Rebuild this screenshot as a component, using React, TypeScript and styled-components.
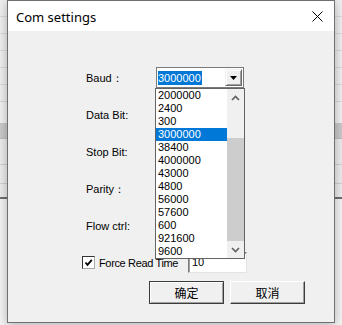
import { Fragment } from 'react';
import styled, { createGlobalStyle } from 'styled-components';

const GlobalStyle = createGlobalStyle`
  html, body {
    margin: 0;
    padding: 0;
    width: 342px;
    height: 325px;
    overflow: hidden;
    background: #f4f4f4;
  }
`;

const BAUDS = [
  '2000000', '2400', '300', '3000000', '38400', '4000000', '43000',
  '4800', '56000', '57600', '600', '921600', '9600',
];

// the other combos sit under the open list, so only Baud shows a value
const FIELDS = [
  { label: 'Baud：', value: '3000000', open: true },
  { label: 'Data Bit:', value: '' },
  { label: 'Stop Bit:', value: '' },
  { label: 'Parity：', value: '' },
  { label: 'Flow ctrl:', value: '' },
];

// rows of the table in the window behind the dialog
const BACK_ROWS = [
  { h: 16, line: '#dadada' },
  { h: 16, line: '#dadada' },
  { h: 16, line: '#dadada' },
  { h: 16, line: '#dadada' },
  { h: 16, line: '#dadada' },
  { h: 16, line: '#dadada' },
  { h: 20, line: 'transparent', bg: '#f1f1f1' },
  { h: 15, line: '#bdbdbd', bg: '#c9c9c9' },
  { h: 25, line: '#d0d0d0', bg: '#ececec' },
  { h: 18, line: '#d0d0d0', bg: '#ececec' },
  { h: 13, line: '#6e6e6e', bg: '#ececec', thick: true },
];

const Desktop = styled.div`
  position: relative;
  width: 342px;
  height: 325px;
  overflow: hidden;
  background: #f4f4f4;
`;

const BackTable = styled.div`
  display: flex;
  flex-direction: column;
`;

const BackRow = styled.div<{ $h: number; $line: string; $bg?: string; $thick?: boolean }>`
  height: ${(p) => p.$h}px;
  background: ${(p) => p.$bg || '#efefef'};
  border-bottom: ${(p) => (p.$thick ? 2 : 1)}px solid ${(p) => p.$line};
`;

const Dialog = styled.div`
  position: absolute;
  left: 7px;
  top: 0;
  width: 328px;
  height: 323px;
  box-sizing: border-box;
  border: 1px solid #707070;
  background: #f0f0f0;
  box-shadow: 0 2px 10px rgba(0, 0, 0, 0.28);
  display: flex;
  flex-direction: column;
`;

const TitleBar = styled.div`
  height: 30px;
  background: #fff;
  display: flex;
  align-items: center;
  justify-content: space-between;
  padding: 0 11px 0 8px;
`;

const Title = styled.span`
  font-family: 'Noto Sans', 'Open Sans', sans-serif;
  font-size: 13px;
  color: #000;
  margin-top: 1px;
`;

const Body = styled.div`
  flex: 1;
  padding: 36px 0 0 78px;
  font-family: 'Liberation Sans', Arial, sans-serif;
  font-size: 11px;
  color: #000;
`;

const Form = styled.div`
  display: grid;
  grid-template-columns: 70px 88px;
  grid-auto-rows: 21px;
  row-gap: 16px;
  align-items: center;
`;

const Label = styled.span`
  line-height: 21px;
  padding-top: 1px;
`;

const Field = styled.div`
  position: relative;
  height: 21px;
`;

const Combo = styled.div`
  box-sizing: border-box;
  width: 88px;
  height: 21px;
  border: 1px solid #7a7a7a;
  background: #fff;
  display: flex;
  align-items: center;
  padding: 0 0 0 1px;
`;

const ComboValue = styled.span<{ $selected?: boolean }>`
  height: 14px;
  line-height: 14px;
  padding: 0 1px 0 0;
  background: ${(p) => (p.$selected ? '#0078d7' : 'transparent')};
  color: ${(p) => (p.$selected ? '#fff' : '#000')};
`;

const DropButton = styled.div`
  box-sizing: border-box;
  margin-left: auto;
  margin-right: 1px;
  width: 17px;
  height: 17px;
  background: #f0f0f0;
  border: 1px solid;
  border-color: #f0f0f0 #696969 #696969 #f0f0f0;
  box-shadow: inset 1px 1px #fff, inset -1px -1px #a0a0a0;
  display: flex;
  align-items: center;
  justify-content: center;
`;

const ListBox = styled.div`
  position: absolute;
  top: 21px;
  left: -1px;
  z-index: 2;
  box-sizing: border-box;
  width: 90px;
  height: 171px;
  border: 1px solid #646464;
  background: #fff;
  display: flex;
`;

const Items = styled.div`
  flex: 1;
  display: flex;
  flex-direction: column;
`;

const Item = styled.div<{ $active?: boolean }>`
  height: 13px;
  line-height: 13px;
  padding-left: 2px;
  background: ${(p) => (p.$active ? '#0078d7' : 'transparent')};
  color: ${(p) => (p.$active ? '#fff' : '#000')};
`;

const ScrollBar = styled.div`
  width: 17px;
  background: #f0f0f0;
  display: flex;
  flex-direction: column;
`;

const ScrollArrow = styled.div`
  height: 17px;
  display: flex;
  align-items: center;
  justify-content: center;
`;

const ScrollTrack = styled.div`
  flex: 1;
  display: flex;
  flex-direction: column;
  padding-top: 32px;
`;

const Thumb = styled.div`
  flex: 1;
  background: #cdcdcd;
`;

const CheckRow = styled.div`
  display: flex;
  align-items: center;
  margin: 16px 0 0 -4px;
  height: 21px;
`;

const CheckLabel = styled.label`
  width: 106px;
  display: flex;
  align-items: center;
  gap: 4px;
  letter-spacing: -0.35px;
`;

const CheckBox = styled.span`
  box-sizing: border-box;
  width: 13px;
  height: 13px;
  background: #fff;
  border: 1px solid;
  border-color: #333 #aaa #aaa #333;
  display: flex;
  align-items: center;
  justify-content: center;
`;

const TextInput = styled.div`
  box-sizing: border-box;
  width: 59px;
  height: 21px;
  background: #fff;
  border: 1px solid;
  border-color: #7a7a7a #e3e3e3 #e3e3e3 #7a7a7a;
  box-shadow: inset 1px 1px #a0a0a0;
  padding: 4px 0 0 3px;
  line-height: 11px;
`;

const Buttons = styled.div`
  display: flex;
  gap: 6px;
  margin: 8px 0 0 63px;
`;

const Button = styled.button<{ $default?: boolean }>`
  box-sizing: border-box;
  width: 75px;
  height: 23px;
  padding: 0;
  background: #f0f0f0;
  border: 1px solid;
  border-color: ${(p) => (p.$default ? '#3c3c3c' : '#fff #3c3c3c #3c3c3c #fff')};
  box-shadow: ${(p) =>
    p.$default
      ? 'inset 1px 1px #fff, inset -1px -1px #a0a0a0'
      : 'inset -1px -1px #a0a0a0'};
  font-family: 'Noto Sans CJK SC', 'Noto Sans', sans-serif;
  font-size: 12px;
  color: #000;
  display: flex;
  align-items: center;
  justify-content: center;
`;

function CloseIcon() {
  return (
    <svg width="11" height="11" viewBox="0 0 11 11">
      <path d="M0.5 0.5 L10.5 10.5 M10.5 0.5 L0.5 10.5" stroke="#000" strokeWidth="1" />
    </svg>
  );
}

function Chevron({ up }: { up?: boolean }) {
  return (
    <svg width="9" height="6" viewBox="0 0 9 6">
      <path
        d={up ? 'M1 5 L4.5 1.5 L8 5' : 'M1 1 L4.5 4.5 L8 1'}
        fill="none"
        stroke="#606060"
        strokeWidth="1.6"
      />
    </svg>
  );
}

function BaudList() {
  return (
    <ListBox>
      <Items>
        {BAUDS.map((b) => (
          <Item key={b} $active={b === '3000000'}>
            {b}
          </Item>
        ))}
      </Items>
      <ScrollBar>
        <ScrollArrow>
          <Chevron up />
        </ScrollArrow>
        <ScrollTrack>
          <Thumb />
        </ScrollTrack>
        <ScrollArrow>
          <Chevron />
        </ScrollArrow>
      </ScrollBar>
    </ListBox>
  );
}

export default function App() {
  return (
    <Desktop>
      <GlobalStyle />
      <BackTable>
        {BACK_ROWS.map((r, i) => (
          <BackRow key={i} $h={r.h} $line={r.line} $bg={r.bg} $thick={r.thick} />
        ))}
      </BackTable>
      <Dialog>
        <TitleBar>
          <Title>Com settings</Title>
          <CloseIcon />
        </TitleBar>
        <Body>
          <Form>
            {FIELDS.map((f) => (
              <Fragment key={f.label}>
                <Label>{f.label}</Label>
                <Field>
                  <Combo>
                    {f.value && <ComboValue $selected={f.open}>{f.value}</ComboValue>}
                    <DropButton>
                      <svg width="7" height="4" viewBox="0 0 7 4">
                        <path d="M0 0 H7 L3.5 4 Z" fill="#000" />
                      </svg>
                    </DropButton>
                  </Combo>
                  {f.open && <BaudList />}
                </Field>
              </Fragment>
            ))}
          </Form>
          <CheckRow>
            <CheckLabel>
              <CheckBox>
                <svg width="9" height="9" viewBox="0 0 9 9">
                  <path d="M1.5 4.5 L3.5 6.8 L7.8 1.8" fill="none" stroke="#000" strokeWidth="1.8" />
                </svg>
              </CheckBox>
              Force Read Time
            </CheckLabel>
            <TextInput>10</TextInput>
          </CheckRow>
          <Buttons>
            <Button $default>确定</Button>
            <Button>取消</Button>
          </Buttons>
        </Body>
      </Dialog>
    </Desktop>
  );
}
